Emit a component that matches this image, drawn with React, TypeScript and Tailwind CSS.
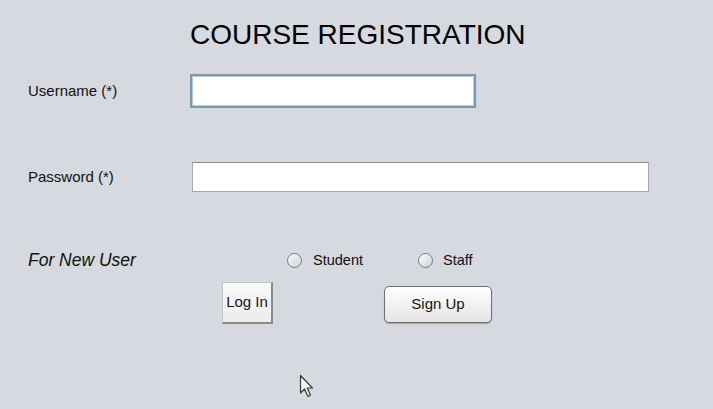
export default function App() {
  return (
    <div className="relative w-[713px] h-[409px] overflow-hidden bg-[#d6d9df] font-['Liberation_Sans',Arial,sans-serif] text-[#111]">
      {/* Title */}
      <h1 className="pt-[19px] pl-[190px] text-[28px] leading-[32px] text-black">COURSE REGISTRATION</h1>

      {/* Username */}
      <div className="mt-[23px] flex items-center h-[34px]">
        <label className="w-[190px] pl-[28px] text-[15px] leading-[18px]">Username (*)</label>
        <input
          type="text"
          className="w-[286px] h-[34px] bg-white border-2 border-[#8095ae] shadow-[inset_0_0_0_1px_#b5c9de,1px_0_0_#b8d4ee] outline-none"
        />
      </div>

      {/* Password */}
      <div className="mt-[54px] flex items-center h-[30px]">
        <label className="w-[192px] pl-[28px] text-[15px] leading-[18px]">Password (*)</label>
        <input
          type="password"
          className="w-[457px] h-[30px] bg-white border border-[#a8a8a8] border-t-[#8c8c8c] outline-none"
        />
      </div>

      {/* New user */}
      <div className="mt-[58px] flex items-center h-[20px]">
        <span className="w-[287px] pl-[28px] text-[17.5px] leading-[20px] italic">For New User</span>
        <div className="flex items-center">
          <span className="w-[15px] h-[15px] rounded-full border border-[#7c7c7c] bg-linear-to-br from-[#fbfbfb] to-[#cfd2d6]" />
          <span className="ml-[11px] text-[14.5px] leading-[18px]">Student</span>
        </div>
        <div className="ml-[55px] flex items-center">
          <span className="w-[15px] h-[15px] rounded-full border border-[#7c7c7c] bg-linear-to-br from-[#fbfbfb] to-[#cfd2d6]" />
          <span className="ml-[10px] text-[14.5px] leading-[18px]">Staff</span>
        </div>
      </div>

      {/* Buttons */}
      <div className="mt-[12px] flex items-start">
        <button className="ml-[222px] w-[51px] h-[42px] bg-linear-to-b from-[#fafafa] to-[#ececec] border border-[#c4c4c4] border-r-2 border-b-2 border-r-[#8a8a8a] border-b-[#8a8a8a] text-[15px] text-[#1c0f2a]">
          Log In
        </button>
        <button className="ml-[111px] mt-[4px] w-[108px] h-[37px] rounded-[5px] bg-linear-to-b from-[#ffffff] to-[#e4e4e4] border border-[#6f6f6f] shadow-[0_1px_1px_rgba(0,0,0,0.25)] text-[15px] text-[#141414]">
          Sign Up
        </button>
      </div>

      {/* Mouse cursor */}
      <svg className="absolute left-[299px] top-[374px]" width="16" height="26" viewBox="0 0 16 26">
        <path
          d="M1.5 1.5 L1.5 19 L5.5 15 L9 22.5 L11.5 21.3 L8.2 14 L13.5 14 Z"
          fill="#f4f4f4"
          stroke="#3a3a3a"
          strokeWidth="1.2"
          strokeLinejoin="round"
        />
      </svg>
    </div>
  )
}
